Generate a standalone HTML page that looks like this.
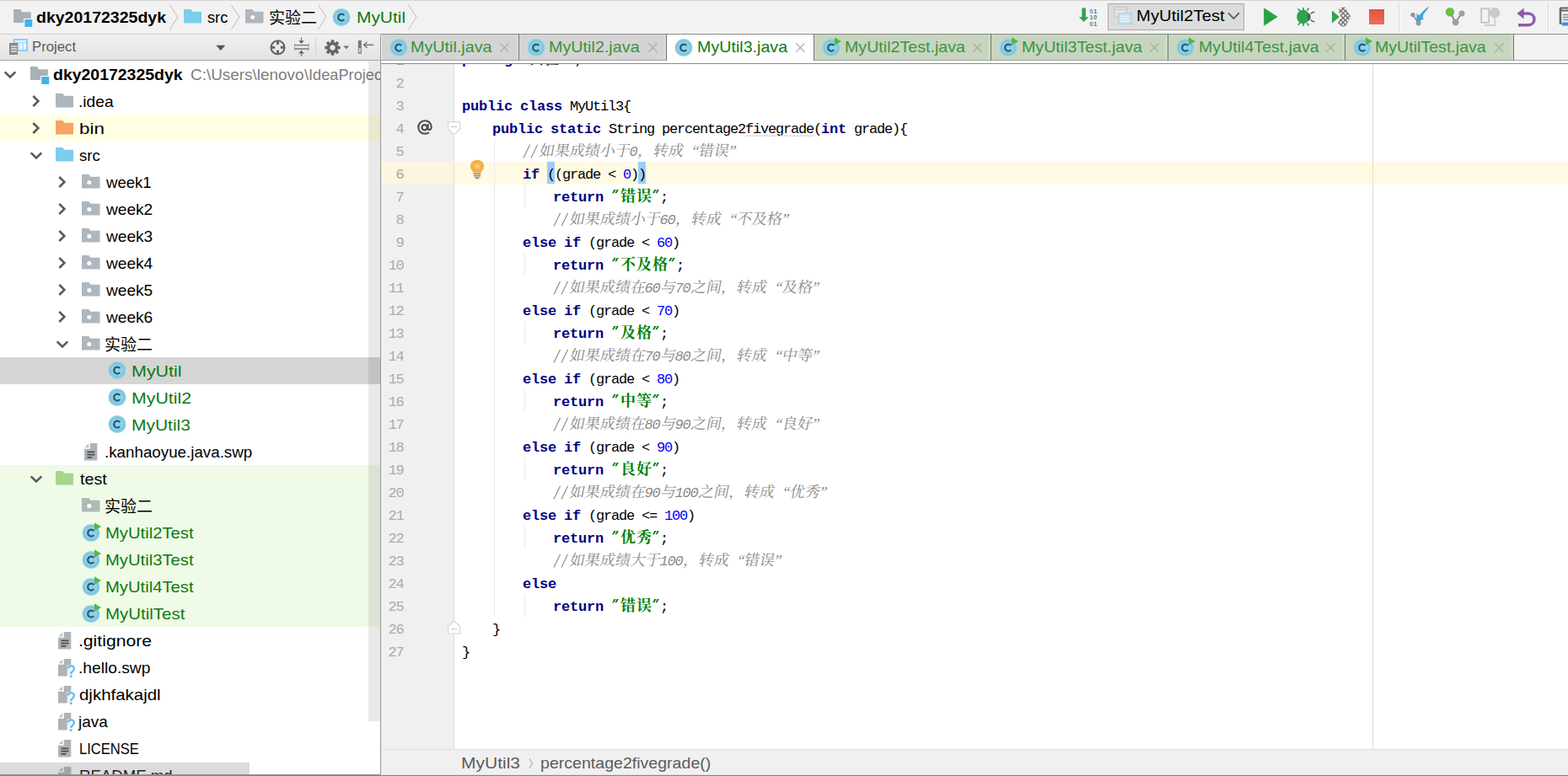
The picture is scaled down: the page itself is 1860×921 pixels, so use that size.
<!DOCTYPE html>
<html><head><meta charset="utf-8"><title>MyUtil3.java</title><style>
html,body{margin:0;padding:0;overflow:hidden}
body{width:1860px;height:921px;overflow:hidden;position:relative;background:#fff;font-family:"Liberation Sans", sans-serif;}
.t{position:absolute;white-space:pre;line-height:1;font-family:"Liberation Sans", sans-serif;transform-origin:0 0;}
.m{position:absolute;white-space:pre;line-height:1;font-family:"Liberation Mono", monospace;}
.g{position:absolute;overflow:visible;display:block}
svg.e{overflow:hidden}
</style></head>
<body>
<div style="position:absolute;left:0px;top:0px;width:1860px;height:41px;background:#f2f2f2;"></div>
<div style="position:absolute;left:0px;top:0px;width:1860px;height:1px;background:#d4d4d4;"></div>
<div style="position:absolute;left:0px;top:40px;width:1860px;height:1px;background:#cfcfcf;"></div>
<div style="position:absolute;left:0px;top:41px;width:452px;height:30px;background:linear-gradient(#f0f0f0,#e3e3e3);"></div>
<div style="position:absolute;left:0px;top:71px;width:452px;height:1px;background:#a6a6a6;"></div>
<div style="position:absolute;left:0px;top:72px;width:452px;height:849px;background:#fff;"></div>
<div style="position:absolute;left:452px;top:41px;width:1408px;height:30px;background:#f2f2f2;"></div>
<div style="position:absolute;left:452px;top:71px;width:1408px;height:4px;background:#fff;"></div>
<div style="position:absolute;left:452px;top:75px;width:1408px;height:1px;background:#8c8c8c;"></div>
<div style="position:absolute;left:452px;top:76px;width:1408px;height:813px;background:#fff;"></div>
<div style="position:absolute;left:452px;top:76px;width:86px;height:813px;background:#f0f0f0;"></div>
<div style="position:absolute;left:538px;top:76px;width:1px;height:813px;background:#dedede;"></div>
<div style="position:absolute;left:1628px;top:76px;width:1px;height:813px;background:#dcdcdc;"></div>
<div style="position:absolute;left:452px;top:192px;width:86px;height:27px;background:#fcf5df;"></div>
<div style="position:absolute;left:539px;top:192px;width:1321px;height:27px;background:#fffae3;"></div>
<div style="position:absolute;left:1628px;top:192px;width:1px;height:27px;background:#e6dfc8;"></div>
<div style="position:absolute;left:452px;top:889px;width:1408px;height:30px;background:#f0f0f0;"></div>
<div style="position:absolute;left:452px;top:889px;width:1408px;height:1px;background:#dedede;"></div>
<div style="position:absolute;left:451px;top:41px;width:1px;height:880px;background:#959595;"></div>
<div style="position:absolute;left:0px;top:920px;width:1860px;height:1px;background:#858585;"></div>
<div style="position:absolute;left:0px;top:919px;width:452px;height:1px;background:#939393;"></div>
<div style="position:absolute;left:452px;top:919px;width:1408px;height:1px;background:#e4e4e4;"></div>
<svg class="g" style="left:16px;top:11px;" width="23" height="22" viewBox="0 0 23 22"><path d="M0,0H8.2L9.8,3.3H20.8V16H0Z" fill="#a9b0b6"/><rect x="12.2" y="11" width="11" height="11" fill="#fff"/><rect x="13.3" y="12" width="9" height="9" fill="#40b4e6"/></svg>
<span class="t" style="left:43.27px;top:10.62px;font-size:19px;color:#000;font-weight:bold;transform:scaleX(1.0268);">dky20172325dyk</span>
<svg class="g" style="left:199.8px;top:4px;" width="13" height="34" viewBox="0 0 13 34"><path d="M0.2,1.5L9.8,16.2L0.2,31" fill="none" stroke="#fbfbfb" stroke-width="1.2"/><path d="M1.2,1.5L10.8,16.2L1.2,31" fill="none" stroke="#c6c6c6" stroke-width="1.2"/></svg>
<svg class="g" style="left:218.4px;top:10.6px;" width="21" height="17" viewBox="0 0 21 17"><path d="M0,0H8.5L10.2,2.7H21V16.5H0Z" fill="#7ccdec"/></svg>
<span class="t" style="left:246.34px;top:10.62px;font-size:19px;color:#000;font-weight:normal;transform:scaleX(0.9583);">src</span>
<svg class="g" style="left:273.2px;top:4px;" width="13" height="34" viewBox="0 0 13 34"><path d="M0.2,1.5L9.8,16.2L0.2,31" fill="none" stroke="#fbfbfb" stroke-width="1.2"/><path d="M1.2,1.5L10.8,16.2L1.2,31" fill="none" stroke="#c6c6c6" stroke-width="1.2"/></svg>
<svg class="g" style="left:291px;top:10.8px;" width="22" height="17" viewBox="0 0 22 17"><path d="M0,0H8.5L10.2,2.7H21.5V16.5H0Z" fill="#aeb6be"/><circle cx="8.8" cy="9.6" r="2.5" fill="#fff"/></svg>
<svg class="g" style="left:318.7px;top:8.7px" width="65" height="27" fill="#000"><text x="0" y="19" font-size="19" fill="#000" font-family="'Liberation Sans','Noto Sans CJK SC',sans-serif">实验二</text></svg>
<svg class="g" style="left:375.9px;top:4px;" width="13" height="34" viewBox="0 0 13 34"><path d="M0.2,1.5L9.8,16.2L0.2,31" fill="none" stroke="#fbfbfb" stroke-width="1.2"/><path d="M1.2,1.5L10.8,16.2L1.2,31" fill="none" stroke="#c6c6c6" stroke-width="1.2"/></svg>
<svg class="g" style="left:393.6px;top:7.5px;overflow:visible;" width="24" height="22" viewBox="0 -1.5 24 22"><circle cx="11" cy="11" r="10.5" fill="#8fd2e6"/><circle cx="11" cy="11" r="8.2" fill="none" stroke="#7ec6df" stroke-width="2.2"/><path d="M14.3,8.6A4,4 0 1 0 14.3,13.6" fill="none" stroke="#2b5b78" stroke-width="2.3"/></svg>
<span class="t" style="left:422.60px;top:10.62px;font-size:19px;color:#0f7a0f;font-weight:normal;transform:scaleX(1.1000);">MyUtil</span>
<svg class="g" style="left:482.6px;top:4px;" width="13" height="34" viewBox="0 0 13 34"><path d="M0.2,1.5L9.8,16.2L0.2,31" fill="none" stroke="#fbfbfb" stroke-width="1.2"/><path d="M1.2,1.5L10.8,16.2L1.2,31" fill="none" stroke="#c6c6c6" stroke-width="1.2"/></svg>
<svg class="g" style="left:11px;top:46px;" width="22" height="20" viewBox="0 0 22 20"><rect x="5.5" y="1" width="15.5" height="13" fill="#e9f5fd" stroke="#7cc3ee" stroke-width="1.6"/><path d="M5.5,4.5h15.5M11,4.5v9.5M16,4.5v9.5" stroke="#9ad0f2" stroke-width="1"/><rect x="0" y="5" width="10" height="14" fill="#8a8a8a"/><path d="M2,9h7M2,12h7M2,15h7" stroke="#e6e6e6" stroke-width="1.3"/></svg>
<span class="t" style="left:38.05px;top:47.76px;font-size:16px;color:#595959;font-weight:normal;transform:scaleX(1.0469);">Project</span>
<svg class="g" style="left:256px;top:53px;" width="12" height="8" viewBox="0 0 12 8"><path d="M0.3,0.8H11.3L5.8,7Z" fill="#555"/></svg>
<svg class="g" style="left:319px;top:46px;" width="21" height="21" viewBox="0 0 21 21"><circle cx="10.5" cy="10.3" r="8" fill="none" stroke="#666" stroke-width="2.1"/><path d="M10.5,2v5M10.5,13.6v5M2.2,10.3h5M13.8,10.3h5" stroke="#666" stroke-width="3"/></svg>
<svg class="g" style="left:348px;top:44px;" width="20" height="24" viewBox="0 0 20 24"><path d="M1,9.6h17.5M1,14h17.5" stroke="#777" stroke-width="1.3"/><path d="M9.5,0.5v7M9.5,23v-7" stroke="#777" stroke-width="1.2"/><path d="M6.2,4.2L9.5,8L12.8,4.2ZM6.2,19.4L9.5,15.6L12.8,19.4Z" fill="#666"/><path d="M1.5,7.5v4M18,7.5v4M1.5,12v4M18,12v4" stroke="#999" stroke-width="1"/></svg>
<div style="position:absolute;left:374px;top:44px;width:1px;height:21px;background:#d2d2d2;"></div>
<svg class="g" style="left:385px;top:46.5px;" width="19" height="19" viewBox="0 0 19 19"><g transform="translate(9.5,9.5)"><rect x="-1.8" y="-9.2" width="3.6" height="6" fill="#666" transform="rotate(0)"/><rect x="-1.8" y="-9.2" width="3.6" height="6" fill="#666" transform="rotate(45)"/><rect x="-1.8" y="-9.2" width="3.6" height="6" fill="#666" transform="rotate(90)"/><rect x="-1.8" y="-9.2" width="3.6" height="6" fill="#666" transform="rotate(135)"/><rect x="-1.8" y="-9.2" width="3.6" height="6" fill="#666" transform="rotate(180)"/><rect x="-1.8" y="-9.2" width="3.6" height="6" fill="#666" transform="rotate(225)"/><rect x="-1.8" y="-9.2" width="3.6" height="6" fill="#666" transform="rotate(270)"/><rect x="-1.8" y="-9.2" width="3.6" height="6" fill="#666" transform="rotate(315)"/><circle r="5.2" fill="none" stroke="#666" stroke-width="3.2"/></g></svg>
<svg class="g" style="left:407px;top:54px;" width="8" height="5" viewBox="0 0 8 5"><path d="M0.3,0.5H7.2L3.8,4.5Z" fill="#777"/></svg>
<svg class="g" style="left:424px;top:47px;" width="21" height="18" viewBox="0 0 21 18"><rect x="0.8" y="1" width="4" height="15.8" fill="#777"/><rect x="1.8" y="10" width="2" height="5.5" fill="#ddd"/><path d="M8,6.3h11" stroke="#777" stroke-width="1.5"/><path d="M11.5,2.8L7.6,6.3L11.5,9.8" fill="none" stroke="#777" stroke-width="1.5"/></svg>
<div style="position:absolute;left:0;top:72px;width:451px;height:847px;overflow:hidden">
<div style="position:absolute;left:0;top:-72px;width:600px;height:921px">
<div style="position:absolute;left:0px;top:136px;width:451px;height:32px;background:#ffffe4;"></div>
<div style="position:absolute;left:0px;top:424px;width:451px;height:32px;background:#d5d5d5;"></div>
<div style="position:absolute;left:0px;top:552px;width:451px;height:192px;background:#effae7;"></div>
<svg class="g" style="left:3.4000000000000004px;top:83.3px;" width="18" height="12" viewBox="0 0 18 12"><path d="M2.7,2.3L9,8.4L15.3,2.3" fill="none" stroke="#595959" stroke-width="2.5"/></svg>
<svg class="g" style="left:36px;top:78.5px;" width="23" height="22" viewBox="0 0 23 22"><path d="M0,0H8.2L9.8,3.3H20.8V16H0Z" fill="#a9b0b6"/><rect x="12.2" y="11" width="11" height="11" fill="#fff"/><rect x="13.3" y="12" width="9" height="9" fill="#40b4e6"/></svg>
<span class="t" style="left:62.88px;top:78.92px;font-size:19px;color:#000;font-weight:bold;transform:scaleX(1.0235);">dky20172325dyk</span>
<span class="t" style="left:226.31px;top:78.92px;font-size:19px;color:#7d7d7d;font-weight:normal;transform:scaleX(0.9947);">C:\Users\lenovo</span>
<span class="t" style="left:360.80px;top:78.92px;font-size:19px;color:#7d7d7d;font-weight:normal;transform:scaleX(0.9575);">\IdeaProjects\dky</span>
<svg class="g" style="left:36.8px;top:111px;" width="12" height="18" viewBox="0 0 12 18"><path d="M2.3,3L8.4,9L2.3,15" fill="none" stroke="#595959" stroke-width="2.5"/></svg>
<svg class="g" style="left:66.3px;top:111.2px;" width="21" height="17" viewBox="0 0 21 17"><path d="M0,0H8.5L10.2,2.7H21V16.5H0Z" fill="#adb5bd"/></svg>
<span class="t" style="left:93.18px;top:110.62px;font-size:19px;color:#000;font-weight:normal;transform:scaleX(1.0103);">.idea</span>
<svg class="g" style="left:36.8px;top:143px;" width="12" height="18" viewBox="0 0 12 18"><path d="M2.3,3L8.4,9L2.3,15" fill="none" stroke="#595959" stroke-width="2.5"/></svg>
<svg class="g" style="left:66.3px;top:143.2px;" width="21" height="17" viewBox="0 0 21 17"><path d="M0,0H8.5L10.2,2.7H21V16.5H0Z" fill="#f9a264"/></svg>
<span class="t" style="left:94.02px;top:142.62px;font-size:19px;color:#000;font-weight:normal;transform:scaleX(1.1783);">bin</span>
<svg class="g" style="left:33.9px;top:179.35px;" width="18" height="12" viewBox="0 0 18 12"><path d="M2.7,2.3L9,8.4L15.3,2.3" fill="none" stroke="#595959" stroke-width="2.5"/></svg>
<svg class="g" style="left:66.3px;top:175.2px;" width="21" height="17" viewBox="0 0 21 17"><path d="M0,0H8.5L10.2,2.7H21V16.5H0Z" fill="#7ccdec"/></svg>
<span class="t" style="left:94.22px;top:174.62px;font-size:19px;color:#000;font-weight:normal;transform:scaleX(0.9750);">src</span>
<svg class="g" style="left:67.5px;top:207px;" width="12" height="18" viewBox="0 0 12 18"><path d="M2.3,3L8.4,9L2.3,15" fill="none" stroke="#595959" stroke-width="2.5"/></svg>
<svg class="g" style="left:97px;top:207.2px;" width="22" height="17" viewBox="0 0 22 17"><path d="M0,0H8.5L10.2,2.7H21.5V16.5H0Z" fill="#aeb6be"/><circle cx="8.8" cy="9.6" r="2.5" fill="#fff"/></svg>
<span class="t" style="left:125.80px;top:206.62px;font-size:19px;color:#000;font-weight:normal;transform:scaleX(0.9778);">week1</span>
<svg class="g" style="left:67.5px;top:239px;" width="12" height="18" viewBox="0 0 12 18"><path d="M2.3,3L8.4,9L2.3,15" fill="none" stroke="#595959" stroke-width="2.5"/></svg>
<svg class="g" style="left:97px;top:239.2px;" width="22" height="17" viewBox="0 0 22 17"><path d="M0,0H8.5L10.2,2.7H21.5V16.5H0Z" fill="#aeb6be"/><circle cx="8.8" cy="9.6" r="2.5" fill="#fff"/></svg>
<span class="t" style="left:125.80px;top:238.62px;font-size:19px;color:#000;font-weight:normal;transform:scaleX(1.0056);">week2</span>
<svg class="g" style="left:67.5px;top:271px;" width="12" height="18" viewBox="0 0 12 18"><path d="M2.3,3L8.4,9L2.3,15" fill="none" stroke="#595959" stroke-width="2.5"/></svg>
<svg class="g" style="left:97px;top:271.2px;" width="22" height="17" viewBox="0 0 22 17"><path d="M0,0H8.5L10.2,2.7H21.5V16.5H0Z" fill="#aeb6be"/><circle cx="8.8" cy="9.6" r="2.5" fill="#fff"/></svg>
<span class="t" style="left:125.80px;top:270.62px;font-size:19px;color:#000;font-weight:normal;transform:scaleX(1.0056);">week3</span>
<svg class="g" style="left:67.5px;top:303px;" width="12" height="18" viewBox="0 0 12 18"><path d="M2.3,3L8.4,9L2.3,15" fill="none" stroke="#595959" stroke-width="2.5"/></svg>
<svg class="g" style="left:97px;top:303.2px;" width="22" height="17" viewBox="0 0 22 17"><path d="M0,0H8.5L10.2,2.7H21.5V16.5H0Z" fill="#aeb6be"/><circle cx="8.8" cy="9.6" r="2.5" fill="#fff"/></svg>
<span class="t" style="left:125.80px;top:302.62px;font-size:19px;color:#000;font-weight:normal;transform:scaleX(1.0056);">week4</span>
<svg class="g" style="left:67.5px;top:335px;" width="12" height="18" viewBox="0 0 12 18"><path d="M2.3,3L8.4,9L2.3,15" fill="none" stroke="#595959" stroke-width="2.5"/></svg>
<svg class="g" style="left:97px;top:335.2px;" width="22" height="17" viewBox="0 0 22 17"><path d="M0,0H8.5L10.2,2.7H21.5V16.5H0Z" fill="#aeb6be"/><circle cx="8.8" cy="9.6" r="2.5" fill="#fff"/></svg>
<span class="t" style="left:125.80px;top:334.62px;font-size:19px;color:#000;font-weight:normal;transform:scaleX(1.0056);">week5</span>
<svg class="g" style="left:67.5px;top:367px;" width="12" height="18" viewBox="0 0 12 18"><path d="M2.3,3L8.4,9L2.3,15" fill="none" stroke="#595959" stroke-width="2.5"/></svg>
<svg class="g" style="left:97px;top:367.2px;" width="22" height="17" viewBox="0 0 22 17"><path d="M0,0H8.5L10.2,2.7H21.5V16.5H0Z" fill="#aeb6be"/><circle cx="8.8" cy="9.6" r="2.5" fill="#fff"/></svg>
<span class="t" style="left:125.80px;top:366.62px;font-size:19px;color:#000;font-weight:normal;transform:scaleX(1.0056);">week6</span>
<svg class="g" style="left:64.5px;top:403.35px;" width="18" height="12" viewBox="0 0 18 12"><path d="M2.7,2.3L9,8.4L15.3,2.3" fill="none" stroke="#595959" stroke-width="2.5"/></svg>
<svg class="g" style="left:97px;top:399.2px;" width="22" height="17" viewBox="0 0 22 17"><path d="M0,0H8.5L10.2,2.7H21.5V16.5H0Z" fill="#aeb6be"/><circle cx="8.8" cy="9.6" r="2.5" fill="#fff"/></svg>
<svg class="g" style="left:123.8px;top:396.8px" width="65" height="27" fill="#000"><text x="0" y="19" font-size="19" fill="#000" font-family="'Liberation Sans','Noto Sans CJK SC',sans-serif">实验二</text></svg>
<svg class="g" style="left:128px;top:427.1px;overflow:visible;" width="24" height="22" viewBox="0 -1.5 24 22"><circle cx="11" cy="11" r="10.5" fill="#8fd2e6"/><circle cx="11" cy="11" r="8.2" fill="none" stroke="#7ec6df" stroke-width="2.2"/><path d="M14.3,8.6A4,4 0 1 0 14.3,13.6" fill="none" stroke="#2b5b78" stroke-width="2.3"/></svg>
<span class="t" style="left:155.54px;top:430.62px;font-size:19px;color:#0f7a0f;font-weight:normal;transform:scaleX(1.1300);">MyUtil</span>
<svg class="g" style="left:128px;top:459.1px;overflow:visible;" width="24" height="22" viewBox="0 -1.5 24 22"><circle cx="11" cy="11" r="10.5" fill="#8fd2e6"/><circle cx="11" cy="11" r="8.2" fill="none" stroke="#7ec6df" stroke-width="2.2"/><path d="M14.3,8.6A4,4 0 1 0 14.3,13.6" fill="none" stroke="#2b5b78" stroke-width="2.3"/></svg>
<span class="t" style="left:155.56px;top:462.62px;font-size:19px;color:#0f7a0f;font-weight:normal;transform:scaleX(1.1217);">MyUtil2</span>
<svg class="g" style="left:128px;top:491.1px;overflow:visible;" width="24" height="22" viewBox="0 -1.5 24 22"><circle cx="11" cy="11" r="10.5" fill="#8fd2e6"/><circle cx="11" cy="11" r="8.2" fill="none" stroke="#7ec6df" stroke-width="2.2"/><path d="M14.3,8.6A4,4 0 1 0 14.3,13.6" fill="none" stroke="#2b5b78" stroke-width="2.3"/></svg>
<span class="t" style="left:155.59px;top:494.62px;font-size:19px;color:#0f7a0f;font-weight:normal;transform:scaleX(1.1033);">MyUtil3</span>
<svg class="g" style="left:100.3px;top:526px;overflow:visible;" width="22" height="22" viewBox="0 0 22 22"><path d="M6.8,0H15.3V20.4H0V6.8H6.8Z" fill="#adb3b8"/><path d="M5.2,0.6V5.2H0.6Z" fill="#b9bec3"/><path d="M3.4,10.3h9M3.4,13.6h9M3.4,16.9h6" stroke="#4d4d4d" stroke-width="1.7"/></svg>
<span class="t" style="left:123.83px;top:526.62px;font-size:19px;color:#000;font-weight:normal;transform:scaleX(0.9874);">.kanhaoyue.java.swp</span>
<svg class="g" style="left:34px;top:563.35px;" width="18" height="12" viewBox="0 0 18 12"><path d="M2.7,2.3L9,8.4L15.3,2.3" fill="none" stroke="#595959" stroke-width="2.5"/></svg>
<svg class="g" style="left:66.3px;top:559.2px;" width="21" height="17" viewBox="0 0 21 17"><path d="M0,0H8.5L10.2,2.7H21V16.5H0Z" fill="#a6d588"/></svg>
<span class="t" style="left:95.20px;top:558.62px;font-size:19px;color:#000;font-weight:normal;transform:scaleX(1.0367);">test</span>
<svg class="g" style="left:97px;top:591.2px;" width="22" height="17" viewBox="0 0 22 17"><path d="M0,0H8.5L10.2,2.7H21.5V16.5H0Z" fill="#b1b9b7"/><circle cx="8.8" cy="9.6" r="2.5" fill="#fff"/></svg>
<svg class="g" style="left:123.8px;top:588.8px" width="65" height="27" fill="#000"><text x="0" y="19" font-size="19" fill="#000" font-family="'Liberation Sans','Noto Sans CJK SC',sans-serif">实验二</text></svg>
<svg class="g" style="left:97px;top:619.8px;overflow:visible;" width="24" height="22" viewBox="0 -1.5 24 22"><circle cx="11" cy="11" r="10.5" fill="#8fd2e6"/><circle cx="11" cy="11" r="8.2" fill="none" stroke="#7ec6df" stroke-width="2.2"/><path d="M14.3,8.6A4,4 0 1 0 14.3,13.6" fill="none" stroke="#2b5b78" stroke-width="2.3"/><path d="M15,-1.2V8.3L23,3.6Z" fill="#55b548"/></svg>
<span class="t" style="left:124.87px;top:622.62px;font-size:19px;color:#0f7a0f;font-weight:normal;transform:scaleX(1.0656);">MyUtil2Test</span>
<svg class="g" style="left:97px;top:651.8px;overflow:visible;" width="24" height="22" viewBox="0 -1.5 24 22"><circle cx="11" cy="11" r="10.5" fill="#8fd2e6"/><circle cx="11" cy="11" r="8.2" fill="none" stroke="#7ec6df" stroke-width="2.2"/><path d="M14.3,8.6A4,4 0 1 0 14.3,13.6" fill="none" stroke="#2b5b78" stroke-width="2.3"/><path d="M15,-1.2V8.3L23,3.6Z" fill="#55b548"/></svg>
<span class="t" style="left:124.87px;top:654.62px;font-size:19px;color:#0f7a0f;font-weight:normal;transform:scaleX(1.0656);">MyUtil3Test</span>
<svg class="g" style="left:97px;top:683.8px;overflow:visible;" width="24" height="22" viewBox="0 -1.5 24 22"><circle cx="11" cy="11" r="10.5" fill="#8fd2e6"/><circle cx="11" cy="11" r="8.2" fill="none" stroke="#7ec6df" stroke-width="2.2"/><path d="M14.3,8.6A4,4 0 1 0 14.3,13.6" fill="none" stroke="#2b5b78" stroke-width="2.3"/><path d="M15,-1.2V8.3L23,3.6Z" fill="#55b548"/></svg>
<span class="t" style="left:124.87px;top:686.62px;font-size:19px;color:#0f7a0f;font-weight:normal;transform:scaleX(1.0656);">MyUtil4Test</span>
<svg class="g" style="left:97px;top:715.8px;overflow:visible;" width="24" height="22" viewBox="0 -1.5 24 22"><circle cx="11" cy="11" r="10.5" fill="#8fd2e6"/><circle cx="11" cy="11" r="8.2" fill="none" stroke="#7ec6df" stroke-width="2.2"/><path d="M14.3,8.6A4,4 0 1 0 14.3,13.6" fill="none" stroke="#2b5b78" stroke-width="2.3"/><path d="M15,-1.2V8.3L23,3.6Z" fill="#55b548"/></svg>
<span class="t" style="left:124.84px;top:718.62px;font-size:19px;color:#0f7a0f;font-weight:normal;transform:scaleX(1.0776);">MyUtilTest</span>
<svg class="g" style="left:69.3px;top:750px;overflow:visible;" width="22" height="22" viewBox="0 0 22 22"><path d="M6.8,0H15.3V20.4H0V6.8H6.8Z" fill="#adb3b8"/><path d="M5.2,0.6V5.2H0.6Z" fill="#b9bec3"/><path d="M3.4,10.3h9M3.4,13.6h9M3.4,16.9h6" stroke="#4d4d4d" stroke-width="1.7"/></svg>
<span class="t" style="left:92.98px;top:750.62px;font-size:19px;color:#000;font-weight:normal;transform:scaleX(1.1120);">.gitignore</span>
<svg class="g" style="left:69.3px;top:782px;overflow:visible;" width="22" height="22" viewBox="0 0 22 22"><path d="M6.8,0H15.3V20.4H0V6.8H6.8Z" fill="#adb3b8"/><path d="M5.2,0.6V5.2H0.6Z" fill="#b9bec3"/><path d="M10.6,7.4h10v14.2h-10z" fill="#fff" opacity=".8"/><path d="M11.8,11.6C11.8,7.4 18.9,7.2 18.9,11.6C18.9,14.6 15.3,14.6 15.3,18" fill="none" stroke="#5fbfeb" stroke-width="2.3"/><circle cx="15.3" cy="20.8" r="1.45" fill="#5fbfeb"/></svg>
<span class="t" style="left:93.18px;top:782.62px;font-size:19px;color:#000;font-weight:normal;transform:scaleX(1.0110);">.hello.swp</span>
<svg class="g" style="left:69.3px;top:814px;overflow:visible;" width="22" height="22" viewBox="0 0 22 22"><path d="M6.8,0H15.3V20.4H0V6.8H6.8Z" fill="#adb3b8"/><path d="M5.2,0.6V5.2H0.6Z" fill="#b9bec3"/><path d="M10.6,7.4h10v14.2h-10z" fill="#fff" opacity=".8"/><path d="M11.8,11.6C11.8,7.4 18.9,7.2 18.9,11.6C18.9,14.6 15.3,14.6 15.3,18" fill="none" stroke="#5fbfeb" stroke-width="2.3"/><circle cx="15.3" cy="20.8" r="1.45" fill="#5fbfeb"/></svg>
<span class="t" style="left:94.32px;top:814.62px;font-size:19px;color:#000;font-weight:normal;transform:scaleX(1.0761);">djkhfakajdl</span>
<svg class="g" style="left:69.3px;top:846px;overflow:visible;" width="22" height="22" viewBox="0 0 22 22"><path d="M6.8,0H15.3V20.4H0V6.8H6.8Z" fill="#adb3b8"/><path d="M5.2,0.6V5.2H0.6Z" fill="#b9bec3"/><path d="M10.6,7.4h10v14.2h-10z" fill="#fff" opacity=".8"/><path d="M11.8,11.6C11.8,7.4 18.9,7.2 18.9,11.6C18.9,14.6 15.3,14.6 15.3,18" fill="none" stroke="#5fbfeb" stroke-width="2.3"/><circle cx="15.3" cy="20.8" r="1.45" fill="#5fbfeb"/></svg>
<span class="t" style="left:93.20px;top:846.62px;font-size:19px;color:#000;font-weight:normal;transform:scaleX(0.9971);">java</span>
<svg class="g" style="left:69.3px;top:878px;overflow:visible;" width="22" height="22" viewBox="0 0 22 22"><path d="M6.8,0H15.3V20.4H0V6.8H6.8Z" fill="#adb3b8"/><path d="M5.2,0.6V5.2H0.6Z" fill="#b9bec3"/><path d="M3.4,10.3h9M3.4,13.6h9M3.4,16.9h6" stroke="#4d4d4d" stroke-width="1.7"/></svg>
<span class="t" style="left:94.06px;top:878.62px;font-size:19px;color:#000;font-weight:normal;transform:scaleX(0.8709);">LICENSE</span>
<svg class="g" style="left:69.3px;top:910px;overflow:visible;" width="22" height="22" viewBox="0 0 22 22"><path d="M6.8,0H15.3V20.4H0V6.8H6.8Z" fill="#adb3b8"/><path d="M5.2,0.6V5.2H0.6Z" fill="#b9bec3"/><path d="M3.4,10.3h9M3.4,13.6h9M3.4,16.9h6" stroke="#4d4d4d" stroke-width="1.7"/></svg>
<span class="t" style="left:93.84px;top:910.62px;font-size:19px;color:#000;font-weight:normal;transform:scaleX(0.9800);">README.md</span>
<div style="position:absolute;left:437px;top:72px;width:14px;height:784px;background:rgba(0,0,0,0.085);"></div>
<div style="position:absolute;left:0px;top:905px;width:296px;height:14px;background:rgba(130,130,130,0.28);"></div>
</div></div>
<svg class="g" style="left:1279px;top:8px;" width="26" height="25" viewBox="0 0 26 25"><path d="M4.4,1.6H8.9V12.3H12.3L6.6,18L0.9,12.3H4.4Z" fill="#2da44e"/><g font-family='"Liberation Sans",sans-serif' font-size="7.4" font-weight="bold" fill="#6e6e6e"><text x="13.6" y="7.6" letter-spacing="0.6"><tspan fill="#4a8fd0">0</tspan>1</text><text x="13.6" y="15.2" letter-spacing="0.6"><tspan fill="#3d9b6a">1</tspan>0</text><text x="13.6" y="22.8" letter-spacing="0.6"><tspan fill="#8a7a6a">0</tspan>1</text></g></svg>
<div style="position:absolute;left:1314px;top:4px;width:162px;height:31.5px;background:#dcdcdc;box-sizing:border-box;border:1.5px solid #a9a9a9;"></div>
<svg class="g" style="left:1320px;top:7px;" width="25" height="23" viewBox="0 0 25 23"><rect x="1.8" y="1.5" width="15" height="11.5" fill="#e4e4e4" stroke="#c6c6c6" stroke-width="1.2"/><path d="M1.8,4.3h15" stroke="#c6c6c6" stroke-width="1.2"/><rect x="6.8" y="8.8" width="15.5" height="12.5" fill="#c4e2f3" stroke="#b4cfdf" stroke-width="1.2"/><path d="M9,12.4h11M9,15.4h11M9,18.4h11" stroke="#eaf5fb" stroke-width="1.3"/></svg>
<span class="t" style="left:1347.77px;top:8.72px;font-size:19px;color:#000;font-weight:normal;transform:scaleX(1.0667);">MyUtil2Test</span>
<svg class="g" style="left:1456px;top:14px;" width="15" height="10" viewBox="0 0 15 10"><path d="M1,1.3L7.4,8L13.8,1.3" fill="none" stroke="#555" stroke-width="1.7"/></svg>
<svg class="g" style="left:1498px;top:8px;" width="20" height="24" viewBox="0 0 20 24"><path d="M1.2,1.2V22.8L17.6,12Z" fill="#27a243"/></svg>
<svg class="g" style="left:1536px;top:8px;" width="26" height="24" viewBox="0 0 26 24"><g stroke="#2da44e" stroke-width="1.7" fill="none"><path d="M6.5,5.5L3.8,2.2M10.5,4L9.8,1M14.5,4.6L16.6,1.6M6.5,18.5L3.8,21.8M10.5,20L9.8,23M14.5,19.4L16.6,22.4"/></g><ellipse cx="9.8" cy="12" rx="7.6" ry="8.2" fill="#2da44e"/><path d="M16,7.2C19.6,8.6 19.6,15.4 16,16.8C14.4,14 14.4,10 16,7.2Z" fill="#555"/><path d="M19,8.6C20,6.8 21.6,6.2 23.4,6.2M19,15.4C20,17.2 21.6,17.8 23.4,17.8" fill="none" stroke="#666" stroke-width="1.5"/></svg>
<svg class="g" style="left:1579px;top:8px;" width="25" height="24" viewBox="0 0 25 24"><path d="M1,4.6V19.4L10,12Z" fill="#2da44e"/><clipPath id="covclip"><path d="M8,4.2L12.6,0.6H16.6L23.4,12L16.6,23.4H12.6L8,19.8L12,12Z"/></clipPath><g stroke="#737373" stroke-width="1.4" fill="none" clip-path="url(#covclip)"><path d="M-42.2,0L-18.2,24M-15.8,0L-39.8,24"/><path d="M-36.8,0L-12.8,24M-10.4,0L-34.4,24"/><path d="M-31.4,0L-7.4,24M-5.0,0L-29.0,24"/><path d="M-26.0,0L-2.0,24M0.4,0L-23.6,24"/><path d="M-20.6,0L3.4,24M5.8,0L-18.2,24"/><path d="M-15.2,0L8.8,24M11.2,0L-12.8,24"/><path d="M-9.8,0L14.2,24M16.6,0L-7.4,24"/><path d="M-4.4,0L19.6,24M22.0,0L-2.0,24"/><path d="M1.0,0L25.0,24M27.4,0L3.4,24"/><path d="M6.4,0L30.4,24M32.8,0L8.8,24"/><path d="M11.8,0L35.8,24M38.2,0L14.2,24"/><path d="M17.2,0L41.2,24M43.6,0L19.6,24"/><path d="M22.6,0L46.6,24M49.0,0L25.0,24"/><path d="M28.0,0L52.0,24M54.4,0L30.4,24"/><path d="M33.4,0L57.4,24M59.8,0L35.8,24"/><path d="M38.8,0L62.8,24M65.2,0L41.2,24"/><path d="M44.2,0L68.2,24M70.6,0L46.6,24"/></g></svg>
<div style="position:absolute;left:1624px;top:11px;width:18px;height:18px;background:linear-gradient(#de523e,#f26d58);"></div>
<div style="position:absolute;left:1659px;top:3px;width:1px;height:36px;background:#d6d6d6;"></div>
<div style="position:absolute;left:1660px;top:3px;width:1px;height:36px;background:#fafafa;"></div>
<svg class="g" style="left:1670px;top:6px;" width="28" height="27" viewBox="0 0 28 27"><path d="M6,11.6L12.6,21.4L18,12" fill="none" stroke="#8d93a0" stroke-width="1.8"/><circle cx="6" cy="11.6" r="2.7" fill="#9197a3"/><circle cx="12.6" cy="21.4" r="3" fill="#9197a3"/><path d="M26,1.6C21,4 17,8 13.6,12.4L10.6,9.8L10.2,19.6L19.4,16.6L16.4,14.6C19,10.4 22,6.4 26,1.6Z" fill="#39a8dc"/></svg>
<svg class="g" style="left:1712px;top:6px;" width="28" height="27" viewBox="0 0 28 27"><path d="M8,8.2L14.6,20.4L22,10" fill="none" stroke="#8d93a0" stroke-width="2"/><circle cx="22" cy="10" r="3.5" fill="#9a9fae"/><circle cx="14.6" cy="20.4" r="3.8" fill="#9a9fae"/><circle cx="8" cy="8.2" r="5.2" fill="#6abf45"/></svg>
<svg class="g" style="left:1755px;top:8px;" width="27" height="24" viewBox="0 0 27 24"><circle cx="18" cy="7.2" r="6.2" fill="#c9c9c9"/><rect x="2.2" y="2.2" width="9" height="16.6" fill="#f2f2f2" stroke="#c4c4c4" stroke-width="1.8"/><path d="M6,22h12.4V12" fill="none" stroke="#cdcdcd" stroke-width="1.8"/></svg>
<svg class="g" style="left:1798px;top:8px;" width="25" height="25" viewBox="0 0 25 25"><path d="M8,8H14.5C24.5,8 24.5,21.8 14.5,21.8H3" fill="none" stroke="#8a5db0" stroke-width="3.4"/><path d="M9.6,1.6V14.4L1.4,8Z" fill="#8a5db0"/></svg>
<div style="position:absolute;left:1836px;top:3px;width:1px;height:36px;background:#d6d6d6;"></div>
<div style="position:absolute;left:1837px;top:3px;width:1px;height:36px;background:#fafafa;"></div>
<svg class="g" style="left:1849px;top:8px;" width="11" height="24" viewBox="0 0 11 24"><path d="M2,1.5h10M2,4.5h10" stroke="#666" stroke-width="2.2"/><path d="M2,1v20" stroke="#666" stroke-width="2.6"/><path d="M5,9.5h7M5,12.5h7M5,15.5h7" stroke="#888" stroke-width="1.3"/><rect x="4" y="18.5" width="8" height="4" fill="#3d8fd8"/></svg>
<div style="position:absolute;left:452px;top:40px;width:1408px;height:1px;background:#8f8f8f;"></div>
<div style="position:absolute;left:452px;top:71px;width:1408px;height:1px;background:#a4a4a4;"></div>
<div style="position:absolute;left:453px;top:41px;width:162px;height:30px;background:#d4d4d4;"></div>
<div style="position:absolute;left:453px;top:40px;width:162px;height:1px;background:#8f8f8f;"></div>
<div style="position:absolute;left:453px;top:71px;width:162px;height:1px;background:#a4a4a4;"></div>
<div style="position:absolute;left:612px;top:41px;width:3px;height:30px;background:rgba(255,255,255,0.13);"></div>
<div style="position:absolute;left:615px;top:40px;width:1px;height:32px;background:#787878;"></div>
<svg class="g" style="left:461.6px;top:43.5px;overflow:visible;" width="24" height="22" viewBox="0 -1.5 24 22"><circle cx="11" cy="11" r="10.5" fill="#8fd2e6"/><circle cx="11" cy="11" r="8.2" fill="none" stroke="#7ec6df" stroke-width="2.2"/><path d="M14.3,8.6A4,4 0 1 0 14.3,13.6" fill="none" stroke="#2b5b78" stroke-width="2.3"/></svg>
<span class="t" style="left:487.22px;top:46.22px;font-size:19px;color:#38933e;font-weight:normal;transform:scaleX(1.0396);">MyUtil.java</span>
<svg class="g" style="left:592.0px;top:50px;" width="13" height="13" viewBox="0 0 13 13"><path d="M1.4,1.4L11.4,11.6M11.4,1.4L1.4,11.6" stroke="#b4b4b4" stroke-width="1.5"/></svg>
<div style="position:absolute;left:616px;top:41px;width:174px;height:30px;background:#d4d4d4;"></div>
<div style="position:absolute;left:616px;top:40px;width:174px;height:1px;background:#8f8f8f;"></div>
<div style="position:absolute;left:616px;top:71px;width:174px;height:1px;background:#a4a4a4;"></div>
<div style="position:absolute;left:787px;top:41px;width:3px;height:30px;background:rgba(255,255,255,0.13);"></div>
<div style="position:absolute;left:790px;top:40px;width:1px;height:32px;background:#787878;"></div>
<svg class="g" style="left:624.6px;top:43.5px;overflow:visible;" width="24" height="22" viewBox="0 -1.5 24 22"><circle cx="11" cy="11" r="10.5" fill="#8fd2e6"/><circle cx="11" cy="11" r="8.2" fill="none" stroke="#7ec6df" stroke-width="2.2"/><path d="M14.3,8.6A4,4 0 1 0 14.3,13.6" fill="none" stroke="#2b5b78" stroke-width="2.3"/></svg>
<span class="t" style="left:651.12px;top:46.22px;font-size:19px;color:#38933e;font-weight:normal;transform:scaleX(1.0402);">MyUtil2.java</span>
<svg class="g" style="left:768.3px;top:50px;" width="13" height="13" viewBox="0 0 13 13"><path d="M1.4,1.4L11.4,11.6M11.4,1.4L1.4,11.6" stroke="#b4b4b4" stroke-width="1.5"/></svg>
<div style="position:absolute;left:791px;top:41px;width:174px;height:31px;background:#fff;"></div>
<div style="position:absolute;left:965px;top:40px;width:1px;height:32px;background:#787878;"></div>
<svg class="g" style="left:799.6px;top:43.5px;overflow:visible;" width="24" height="22" viewBox="0 -1.5 24 22"><circle cx="11" cy="11" r="10.5" fill="#8fd2e6"/><circle cx="11" cy="11" r="8.2" fill="none" stroke="#7ec6df" stroke-width="2.2"/><path d="M14.3,8.6A4,4 0 1 0 14.3,13.6" fill="none" stroke="#2b5b78" stroke-width="2.3"/></svg>
<span class="t" style="left:826.63px;top:46.22px;font-size:19px;color:#0f7a0f;font-weight:normal;transform:scaleX(1.0353);">MyUtil3.java</span>
<svg class="g" style="left:942.9px;top:50px;" width="13" height="13" viewBox="0 0 13 13"><path d="M1.4,1.4L11.4,11.6M11.4,1.4L1.4,11.6" stroke="#bdbdbd" stroke-width="1.5"/></svg>
<div style="position:absolute;left:966px;top:41px;width:209px;height:30px;background:#c8d5c0;"></div>
<div style="position:absolute;left:966px;top:40px;width:209px;height:1px;background:#858d82;"></div>
<div style="position:absolute;left:966px;top:71px;width:209px;height:1px;background:#98a194;"></div>
<div style="position:absolute;left:1172px;top:41px;width:3px;height:30px;background:rgba(255,255,255,0.13);"></div>
<div style="position:absolute;left:1175px;top:40px;width:1px;height:32px;background:#6f776c;"></div>
<svg class="g" style="left:974.6px;top:43.5px;overflow:visible;" width="24" height="22" viewBox="0 -1.5 24 22"><circle cx="11" cy="11" r="10.5" fill="#8fd2e6"/><circle cx="11" cy="11" r="8.2" fill="none" stroke="#7ec6df" stroke-width="2.2"/><path d="M14.3,8.6A4,4 0 1 0 14.3,13.6" fill="none" stroke="#2b5b78" stroke-width="2.3"/><path d="M15,-1.2V8.3L23,3.6Z" fill="#55b548"/></svg>
<span class="t" style="left:1001.63px;top:46.22px;font-size:19px;color:#3a9640;font-weight:normal;transform:scaleX(1.0338);">MyUtil2Test.java</span>
<svg class="g" style="left:1152.9px;top:50px;" width="13" height="13" viewBox="0 0 13 13"><path d="M1.4,1.4L11.4,11.6M11.4,1.4L1.4,11.6" stroke="#abb7a5" stroke-width="1.5"/></svg>
<div style="position:absolute;left:1176px;top:41px;width:209px;height:30px;background:#c8d5c0;"></div>
<div style="position:absolute;left:1176px;top:40px;width:209px;height:1px;background:#858d82;"></div>
<div style="position:absolute;left:1176px;top:71px;width:209px;height:1px;background:#98a194;"></div>
<div style="position:absolute;left:1382px;top:41px;width:3px;height:30px;background:rgba(255,255,255,0.13);"></div>
<div style="position:absolute;left:1385px;top:40px;width:1px;height:32px;background:#6f776c;"></div>
<svg class="g" style="left:1184.6px;top:43.5px;overflow:visible;" width="24" height="22" viewBox="0 -1.5 24 22"><circle cx="11" cy="11" r="10.5" fill="#8fd2e6"/><circle cx="11" cy="11" r="8.2" fill="none" stroke="#7ec6df" stroke-width="2.2"/><path d="M14.3,8.6A4,4 0 1 0 14.3,13.6" fill="none" stroke="#2b5b78" stroke-width="2.3"/><path d="M15,-1.2V8.3L23,3.6Z" fill="#55b548"/></svg>
<span class="t" style="left:1211.63px;top:46.22px;font-size:19px;color:#3a9640;font-weight:normal;transform:scaleX(1.0338);">MyUtil3Test.java</span>
<svg class="g" style="left:1362.9px;top:50px;" width="13" height="13" viewBox="0 0 13 13"><path d="M1.4,1.4L11.4,11.6M11.4,1.4L1.4,11.6" stroke="#abb7a5" stroke-width="1.5"/></svg>
<div style="position:absolute;left:1386px;top:41px;width:209px;height:30px;background:#c8d5c0;"></div>
<div style="position:absolute;left:1386px;top:40px;width:209px;height:1px;background:#858d82;"></div>
<div style="position:absolute;left:1386px;top:71px;width:209px;height:1px;background:#98a194;"></div>
<div style="position:absolute;left:1592px;top:41px;width:3px;height:30px;background:rgba(255,255,255,0.13);"></div>
<div style="position:absolute;left:1595px;top:40px;width:1px;height:32px;background:#6f776c;"></div>
<svg class="g" style="left:1394.6px;top:43.5px;overflow:visible;" width="24" height="22" viewBox="0 -1.5 24 22"><circle cx="11" cy="11" r="10.5" fill="#8fd2e6"/><circle cx="11" cy="11" r="8.2" fill="none" stroke="#7ec6df" stroke-width="2.2"/><path d="M14.3,8.6A4,4 0 1 0 14.3,13.6" fill="none" stroke="#2b5b78" stroke-width="2.3"/><path d="M15,-1.2V8.3L23,3.6Z" fill="#55b548"/></svg>
<span class="t" style="left:1421.64px;top:46.22px;font-size:19px;color:#3a9640;font-weight:normal;transform:scaleX(1.0316);">MyUtil4Test.java</span>
<svg class="g" style="left:1572.3px;top:50px;" width="13" height="13" viewBox="0 0 13 13"><path d="M1.4,1.4L11.4,11.6M11.4,1.4L1.4,11.6" stroke="#abb7a5" stroke-width="1.5"/></svg>
<div style="position:absolute;left:1596px;top:41px;width:199px;height:30px;background:#c8d5c0;"></div>
<div style="position:absolute;left:1596px;top:40px;width:199px;height:1px;background:#858d82;"></div>
<div style="position:absolute;left:1596px;top:71px;width:199px;height:1px;background:#98a194;"></div>
<div style="position:absolute;left:1792px;top:41px;width:3px;height:30px;background:rgba(255,255,255,0.13);"></div>
<div style="position:absolute;left:1795px;top:40px;width:1px;height:32px;background:#6f776c;"></div>
<svg class="g" style="left:1604.6px;top:43.5px;overflow:visible;" width="24" height="22" viewBox="0 -1.5 24 22"><circle cx="11" cy="11" r="10.5" fill="#8fd2e6"/><circle cx="11" cy="11" r="8.2" fill="none" stroke="#7ec6df" stroke-width="2.2"/><path d="M14.3,8.6A4,4 0 1 0 14.3,13.6" fill="none" stroke="#2b5b78" stroke-width="2.3"/><path d="M15,-1.2V8.3L23,3.6Z" fill="#55b548"/></svg>
<span class="t" style="left:1631.14px;top:46.22px;font-size:19px;color:#3a9640;font-weight:normal;transform:scaleX(1.0310);">MyUtilTest.java</span>
<svg class="g" style="left:1771.8px;top:50px;" width="13" height="13" viewBox="0 0 13 13"><path d="M1.4,1.4L11.4,11.6M11.4,1.4L1.4,11.6" stroke="#abb7a5" stroke-width="1.5"/></svg>
<div style="position:absolute;left:451px;top:41px;width:1px;height:880px;background:#959595;"></div>
<div style="position:absolute;left:452px;top:76px;width:1408px;height:813px;overflow:hidden"><div style="position:absolute;left:-452px;top:-76px;width:1860px;height:921px">
<span class="m" style="left:469.5px;top:63.57px;font-size:17px;color:#ababab;font-weight:normal;letter-spacing:-1.202px;">1</span>
<span class="m" style="left:469.5px;top:90.57px;font-size:17px;color:#ababab;font-weight:normal;letter-spacing:-1.202px;">2</span>
<span class="m" style="left:469.5px;top:117.57px;font-size:17px;color:#ababab;font-weight:normal;letter-spacing:-1.202px;">3</span>
<span class="m" style="left:469.5px;top:144.57px;font-size:17px;color:#ababab;font-weight:normal;letter-spacing:-1.202px;">4</span>
<span class="m" style="left:469.5px;top:171.57px;font-size:17px;color:#ababab;font-weight:normal;letter-spacing:-1.202px;">5</span>
<span class="m" style="left:469.5px;top:198.57px;font-size:17px;color:#b0a48e;font-weight:normal;letter-spacing:-1.202px;">6</span>
<span class="m" style="left:469.5px;top:225.57px;font-size:17px;color:#ababab;font-weight:normal;letter-spacing:-1.202px;">7</span>
<span class="m" style="left:469.5px;top:252.57px;font-size:17px;color:#ababab;font-weight:normal;letter-spacing:-1.202px;">8</span>
<span class="m" style="left:469.5px;top:279.57px;font-size:17px;color:#ababab;font-weight:normal;letter-spacing:-1.202px;">9</span>
<span class="m" style="left:460.5px;top:306.57px;font-size:17px;color:#ababab;font-weight:normal;letter-spacing:-1.202px;">10</span>
<span class="m" style="left:460.5px;top:333.57px;font-size:17px;color:#ababab;font-weight:normal;letter-spacing:-1.202px;">11</span>
<span class="m" style="left:460.5px;top:360.57px;font-size:17px;color:#ababab;font-weight:normal;letter-spacing:-1.202px;">12</span>
<span class="m" style="left:460.5px;top:387.57px;font-size:17px;color:#ababab;font-weight:normal;letter-spacing:-1.202px;">13</span>
<span class="m" style="left:460.5px;top:414.57px;font-size:17px;color:#ababab;font-weight:normal;letter-spacing:-1.202px;">14</span>
<span class="m" style="left:460.5px;top:441.57px;font-size:17px;color:#ababab;font-weight:normal;letter-spacing:-1.202px;">15</span>
<span class="m" style="left:460.5px;top:468.57px;font-size:17px;color:#ababab;font-weight:normal;letter-spacing:-1.202px;">16</span>
<span class="m" style="left:460.5px;top:495.57px;font-size:17px;color:#ababab;font-weight:normal;letter-spacing:-1.202px;">17</span>
<span class="m" style="left:460.5px;top:522.57px;font-size:17px;color:#ababab;font-weight:normal;letter-spacing:-1.202px;">18</span>
<span class="m" style="left:460.5px;top:549.57px;font-size:17px;color:#ababab;font-weight:normal;letter-spacing:-1.202px;">19</span>
<span class="m" style="left:460.5px;top:576.57px;font-size:17px;color:#ababab;font-weight:normal;letter-spacing:-1.202px;">20</span>
<span class="m" style="left:460.5px;top:603.57px;font-size:17px;color:#ababab;font-weight:normal;letter-spacing:-1.202px;">21</span>
<span class="m" style="left:460.5px;top:630.57px;font-size:17px;color:#ababab;font-weight:normal;letter-spacing:-1.202px;">22</span>
<span class="m" style="left:460.5px;top:657.57px;font-size:17px;color:#ababab;font-weight:normal;letter-spacing:-1.202px;">23</span>
<span class="m" style="left:460.5px;top:684.57px;font-size:17px;color:#ababab;font-weight:normal;letter-spacing:-1.202px;">24</span>
<span class="m" style="left:460.5px;top:711.57px;font-size:17px;color:#ababab;font-weight:normal;letter-spacing:-1.202px;">25</span>
<span class="m" style="left:460.5px;top:738.57px;font-size:17px;color:#ababab;font-weight:normal;letter-spacing:-1.202px;">26</span>
<span class="m" style="left:460.5px;top:765.57px;font-size:17px;color:#ababab;font-weight:normal;letter-spacing:-1.202px;">27</span>
<svg class="g" style="left:495px;top:142.4px;" width="19" height="19" viewBox="0 0 19 19"><circle cx="8.6" cy="9.2" r="3.1" fill="none" stroke="#4d4d4d" stroke-width="2.2"/><path d="M12.6,5V10.6C12.6,12.9 16.7,12.9 16.7,8.6C16.7,3.9 13.2,1.3 9,1.3C4.6,1.3 1.3,4.7 1.3,9C1.3,13.4 4.6,16.7 9,16.7C10.9,16.7 12.5,16.3 13.9,15.4" fill="none" stroke="#4d4d4d" stroke-width="2.1"/></svg>
<svg class="g" style="left:531px;top:143.8px;" width="16" height="17" viewBox="0 0 16 17"><path d="M0.6,0.6H14.6V9.4L7.6,15.6L0.6,9.4Z" fill="#fff" stroke="#d3d3d3" stroke-width="1.1"/><path d="M4,6.4h7.2" stroke="#c9c9c9" stroke-width="1.2"/></svg>
<svg class="g" style="left:531px;top:735.6px;" width="16" height="17" viewBox="0 0 16 17"><path d="M0.6,16H14.6V7.2L7.6,1L0.6,7.2Z" fill="#fff" stroke="#d3d3d3" stroke-width="1.1"/><path d="M4,10.6h7.2" stroke="#c9c9c9" stroke-width="1.2"/></svg>
<svg class="g" style="left:557px;top:189px;" width="18" height="24" viewBox="0 0 18 24"><path d="M9,0.8C3.6,0.8 1,4.6 1,8.4C1,12 4,13.6 4.6,16.6H13.4C14,13.6 17,12 17,8.4C17,4.6 14.4,0.8 9,0.8Z" fill="#f3b04e"/><circle cx="9" cy="8.2" r="3.2" fill="#f7c56e"/><circle cx="9" cy="8.2" r="1.2" fill="#f9dc9a"/><path d="M4.8,17.6h8.4M4.8,19.8h8.4" stroke="#8a8a8a" stroke-width="1.5"/><path d="M6,21.6h6l-1,1.4h-4z" fill="#777"/></svg>
<div style="position:absolute;left:586px;top:165px;width:1px;height:567px;background:#ebebeb;"></div>
<div style="position:absolute;left:622px;top:219px;width:1px;height:27px;background:#ebebeb;"></div>
<div style="position:absolute;left:622px;top:300px;width:1px;height:27px;background:#ebebeb;"></div>
<div style="position:absolute;left:622px;top:381px;width:1px;height:27px;background:#ebebeb;"></div>
<div style="position:absolute;left:622px;top:462px;width:1px;height:27px;background:#ebebeb;"></div>
<div style="position:absolute;left:622px;top:543px;width:1px;height:27px;background:#ebebeb;"></div>
<div style="position:absolute;left:622px;top:624px;width:1px;height:27px;background:#ebebeb;"></div>
<div style="position:absolute;left:622px;top:705px;width:1px;height:27px;background:#ebebeb;"></div>
<div style="position:absolute;left:649px;top:192px;width:9px;height:26px;background:#9bcbff;"></div>
<div style="position:absolute;left:757px;top:192px;width:9px;height:26px;background:#9bcbff;"></div>
<span class="m" style="left:548.0px;top:62.97px;font-size:17px;color:#000080;font-weight:bold;letter-spacing:-0.202px;">package</span>
<svg class="g" style="left:627px;top:58.39999999999999px" width="62" height="25" fill="#000"><text x="0" y="18" font-size="18" fill="#000" font-family="'Liberation Serif','Noto Serif CJK SC',serif">实验二</text></svg>
<span class="m" style="left:681.0px;top:62.97px;font-size:17px;color:#000;font-weight:normal;letter-spacing:-1.202px;">;</span>
<span class="m" style="left:548.0px;top:117.57px;font-size:17px;color:#000080;font-weight:bold;letter-spacing:-0.202px;">public</span>
<span class="m" style="left:617.0px;top:117.57px;font-size:17px;color:#000080;font-weight:bold;letter-spacing:-0.202px;">class</span>
<span class="m" style="left:676.0px;top:117.57px;font-size:17px;color:#000;font-weight:normal;letter-spacing:-1.202px;">MyUtil3{</span>
<span class="m" style="left:584.0px;top:144.57px;font-size:17px;color:#000080;font-weight:bold;letter-spacing:-0.202px;">public</span>
<span class="m" style="left:653.0px;top:144.57px;font-size:17px;color:#000080;font-weight:bold;letter-spacing:-0.202px;">static</span>
<span class="m" style="left:722.0px;top:144.57px;font-size:17px;color:#000;font-weight:normal;letter-spacing:-1.202px;">String percentage2fivegrade(</span>
<span class="m" style="left:974.0px;top:144.57px;font-size:17px;color:#000080;font-weight:bold;letter-spacing:-0.202px;">int</span>
<span class="m" style="left:1013.0px;top:144.57px;font-size:17px;color:#000;font-weight:normal;letter-spacing:-1.202px;">grade){</span>
<svg class="g" style="left:884px;top:159.6px;" width="82" height="4" viewBox="0 0 82 4"><path d="M0,2L2,0.4L4,2L6,0.4L8,2L10,0.4L12,2L14,0.4L16,2L18,0.4L20,2L22,0.4L24,2L26,0.4L28,2L30,0.4L32,2L34,0.4L36,2L38,0.4L40,2L42,0.4L44,2L46,0.4L48,2L50,0.4L52,2L54,0.4L56,2L58,0.4L60,2L62,0.4L64,2L66,0.4L68,2L70,0.4L72,2L74,0.4L76,2L78,0.4L80,2L82,0.4" fill="none" stroke="#cfcfcf" stroke-width="1"/></svg>
<svg class="g" style="left:620px;top:170.6px;" width="20" height="18" viewBox="0 0 20 18"><path d="M1,16.6L8.6,0.8M10,16.6L17.6,0.8" fill="none" stroke="#8d8d8d" stroke-width="1.15"/></svg>
<svg class="g" style="left:638.8px;top:166.7px" width="116" height="25" fill="#8a8a8a"><text transform="translate(0,18) skewX(-11)" x="0 18 36 54 72 90" y="0" font-size="18" fill="#8a8a8a" font-family="'Liberation Serif','Noto Serif CJK SC',serif">如果成绩小于</text></svg>
<span class="m" style="left:746.6px;top:171.57px;font-size:17px;color:#8a8a8a;font-weight:normal;letter-spacing:-1.202px;font-style:italic;">0</span>
<svg class="g" style="left:755.8px;top:166.7px" width="134" height="25" fill="#8a8a8a"><text transform="translate(0,18) skewX(-11)" x="0 18 36 64 72 90 108" y="0" font-size="18" fill="#8a8a8a" font-family="'Liberation Serif','Noto Serif CJK SC',serif">，转成“错误”</text></svg>
<span class="m" style="left:620.0px;top:198.57px;font-size:17px;color:#000080;font-weight:bold;letter-spacing:-0.202px;">if</span>
<span class="m" style="left:649.0px;top:198.57px;font-size:17px;color:#000;font-weight:normal;letter-spacing:-1.202px;">((grade &lt; </span>
<span class="m" style="left:739.0px;top:198.57px;font-size:17px;color:#0000ff;font-weight:normal;letter-spacing:-1.202px;">0</span>
<span class="m" style="left:748.0px;top:198.57px;font-size:17px;color:#000;font-weight:normal;letter-spacing:-1.202px;">))</span>
<span class="m" style="left:656.0px;top:225.57px;font-size:17px;color:#000080;font-weight:bold;letter-spacing:-0.202px;">return</span>
<svg class="g" style="left:725px;top:225.0px;" width="10" height="6" viewBox="0 0 10 6"><path d="M1.2,4.3L3.3,0H5.6L3.1,4.3ZM4.5,4.3L6.6,0H8.9L6.4,4.3Z" fill="#008000"/></svg>
<svg class="g" style="left:735.5px;top:221.0px" width="46" height="25" fill="#008000"><text x="0 19" y="18" font-size="18" font-weight="bold" fill="#008000" font-family="'Liberation Serif','Noto Serif CJK SC',serif">错误</text></svg>
<svg class="g" style="left:773px;top:225.0px;" width="10" height="6" viewBox="0 0 10 6"><path d="M1.2,4.3L3.3,0H5.6L3.1,4.3ZM4.5,4.3L6.6,0H8.9L6.4,4.3Z" fill="#008000"/></svg>
<span class="m" style="left:783.0px;top:225.57px;font-size:17px;color:#000;font-weight:normal;letter-spacing:-1.202px;">;</span>
<svg class="g" style="left:656px;top:251.60000000000002px;" width="20" height="18" viewBox="0 0 20 18"><path d="M1,16.6L8.6,0.8M10,16.6L17.6,0.8" fill="none" stroke="#8d8d8d" stroke-width="1.15"/></svg>
<svg class="g" style="left:674.8px;top:247.70000000000005px" width="116" height="25" fill="#8a8a8a"><text transform="translate(0,18) skewX(-11)" x="0 18 36 54 72 90" y="0" font-size="18" fill="#8a8a8a" font-family="'Liberation Serif','Noto Serif CJK SC',serif">如果成绩小于</text></svg>
<span class="m" style="left:782.6px;top:252.57px;font-size:17px;color:#8a8a8a;font-weight:normal;letter-spacing:-1.202px;font-style:italic;">60</span>
<svg class="g" style="left:800.8px;top:247.70000000000005px" width="152" height="25" fill="#8a8a8a"><text transform="translate(0,18) skewX(-11)" x="0 18 36 64 72 90 108 126" y="0" font-size="18" fill="#8a8a8a" font-family="'Liberation Serif','Noto Serif CJK SC',serif">，转成“不及格”</text></svg>
<span class="m" style="left:620.0px;top:279.57px;font-size:17px;color:#000080;font-weight:bold;letter-spacing:-0.202px;">else</span>
<span class="m" style="left:669.0px;top:279.57px;font-size:17px;color:#000080;font-weight:bold;letter-spacing:-0.202px;">if</span>
<span class="m" style="left:698.0px;top:279.57px;font-size:17px;color:#000;font-weight:normal;letter-spacing:-1.202px;">(grade &lt; </span>
<span class="m" style="left:779.0px;top:279.57px;font-size:17px;color:#0000ff;font-weight:normal;letter-spacing:-1.202px;">60</span>
<span class="m" style="left:797.0px;top:279.57px;font-size:17px;color:#000;font-weight:normal;letter-spacing:-1.202px;">)</span>
<span class="m" style="left:656.0px;top:306.57px;font-size:17px;color:#000080;font-weight:bold;letter-spacing:-0.202px;">return</span>
<svg class="g" style="left:725px;top:306.0px;" width="10" height="6" viewBox="0 0 10 6"><path d="M1.2,4.3L3.3,0H5.6L3.1,4.3ZM4.5,4.3L6.6,0H8.9L6.4,4.3Z" fill="#008000"/></svg>
<svg class="g" style="left:735.5px;top:302.0px" width="65" height="25" fill="#008000"><text x="0 19 38" y="18" font-size="18" font-weight="bold" fill="#008000" font-family="'Liberation Serif','Noto Serif CJK SC',serif">不及格</text></svg>
<svg class="g" style="left:792px;top:306.0px;" width="10" height="6" viewBox="0 0 10 6"><path d="M1.2,4.3L3.3,0H5.6L3.1,4.3ZM4.5,4.3L6.6,0H8.9L6.4,4.3Z" fill="#008000"/></svg>
<span class="m" style="left:802.0px;top:306.57px;font-size:17px;color:#000;font-weight:normal;letter-spacing:-1.202px;">;</span>
<svg class="g" style="left:656px;top:332.6px;" width="20" height="18" viewBox="0 0 20 18"><path d="M1,16.6L8.6,0.8M10,16.6L17.6,0.8" fill="none" stroke="#8d8d8d" stroke-width="1.15"/></svg>
<svg class="g" style="left:674.8px;top:328.70000000000005px" width="98" height="25" fill="#8a8a8a"><text transform="translate(0,18) skewX(-11)" x="0 18 36 54 72" y="0" font-size="18" fill="#8a8a8a" font-family="'Liberation Serif','Noto Serif CJK SC',serif">如果成绩在</text></svg>
<span class="m" style="left:764.6px;top:333.57px;font-size:17px;color:#8a8a8a;font-weight:normal;letter-spacing:-1.202px;font-style:italic;">60</span>
<svg class="g" style="left:782.8px;top:328.70000000000005px" width="26" height="25" fill="#8a8a8a"><text transform="translate(0,18) skewX(-11)" x="0" y="0" font-size="18" fill="#8a8a8a" font-family="'Liberation Serif','Noto Serif CJK SC',serif">与</text></svg>
<span class="m" style="left:800.6px;top:333.57px;font-size:17px;color:#8a8a8a;font-weight:normal;letter-spacing:-1.202px;font-style:italic;">70</span>
<svg class="g" style="left:818.8px;top:328.70000000000005px" width="170" height="25" fill="#8a8a8a"><text transform="translate(0,18) skewX(-11)" x="0 18 36 54 72 100 108 126 144" y="0" font-size="18" fill="#8a8a8a" font-family="'Liberation Serif','Noto Serif CJK SC',serif">之间，转成“及格”</text></svg>
<span class="m" style="left:620.0px;top:360.57px;font-size:17px;color:#000080;font-weight:bold;letter-spacing:-0.202px;">else</span>
<span class="m" style="left:669.0px;top:360.57px;font-size:17px;color:#000080;font-weight:bold;letter-spacing:-0.202px;">if</span>
<span class="m" style="left:698.0px;top:360.57px;font-size:17px;color:#000;font-weight:normal;letter-spacing:-1.202px;">(grade &lt; </span>
<span class="m" style="left:779.0px;top:360.57px;font-size:17px;color:#0000ff;font-weight:normal;letter-spacing:-1.202px;">70</span>
<span class="m" style="left:797.0px;top:360.57px;font-size:17px;color:#000;font-weight:normal;letter-spacing:-1.202px;">)</span>
<span class="m" style="left:656.0px;top:387.57px;font-size:17px;color:#000080;font-weight:bold;letter-spacing:-0.202px;">return</span>
<svg class="g" style="left:725px;top:387.0px;" width="10" height="6" viewBox="0 0 10 6"><path d="M1.2,4.3L3.3,0H5.6L3.1,4.3ZM4.5,4.3L6.6,0H8.9L6.4,4.3Z" fill="#008000"/></svg>
<svg class="g" style="left:735.5px;top:383.0px" width="46" height="25" fill="#008000"><text x="0 19" y="18" font-size="18" font-weight="bold" fill="#008000" font-family="'Liberation Serif','Noto Serif CJK SC',serif">及格</text></svg>
<svg class="g" style="left:773px;top:387.0px;" width="10" height="6" viewBox="0 0 10 6"><path d="M1.2,4.3L3.3,0H5.6L3.1,4.3ZM4.5,4.3L6.6,0H8.9L6.4,4.3Z" fill="#008000"/></svg>
<span class="m" style="left:783.0px;top:387.57px;font-size:17px;color:#000;font-weight:normal;letter-spacing:-1.202px;">;</span>
<svg class="g" style="left:656px;top:413.6px;" width="20" height="18" viewBox="0 0 20 18"><path d="M1,16.6L8.6,0.8M10,16.6L17.6,0.8" fill="none" stroke="#8d8d8d" stroke-width="1.15"/></svg>
<svg class="g" style="left:674.8px;top:409.70000000000005px" width="98" height="25" fill="#8a8a8a"><text transform="translate(0,18) skewX(-11)" x="0 18 36 54 72" y="0" font-size="18" fill="#8a8a8a" font-family="'Liberation Serif','Noto Serif CJK SC',serif">如果成绩在</text></svg>
<span class="m" style="left:764.6px;top:414.57px;font-size:17px;color:#8a8a8a;font-weight:normal;letter-spacing:-1.202px;font-style:italic;">70</span>
<svg class="g" style="left:782.8px;top:409.70000000000005px" width="26" height="25" fill="#8a8a8a"><text transform="translate(0,18) skewX(-11)" x="0" y="0" font-size="18" fill="#8a8a8a" font-family="'Liberation Serif','Noto Serif CJK SC',serif">与</text></svg>
<span class="m" style="left:800.6px;top:414.57px;font-size:17px;color:#8a8a8a;font-weight:normal;letter-spacing:-1.202px;font-style:italic;">80</span>
<svg class="g" style="left:818.8px;top:409.70000000000005px" width="170" height="25" fill="#8a8a8a"><text transform="translate(0,18) skewX(-11)" x="0 18 36 54 72 100 108 126 144" y="0" font-size="18" fill="#8a8a8a" font-family="'Liberation Serif','Noto Serif CJK SC',serif">之间，转成“中等”</text></svg>
<span class="m" style="left:620.0px;top:441.57px;font-size:17px;color:#000080;font-weight:bold;letter-spacing:-0.202px;">else</span>
<span class="m" style="left:669.0px;top:441.57px;font-size:17px;color:#000080;font-weight:bold;letter-spacing:-0.202px;">if</span>
<span class="m" style="left:698.0px;top:441.57px;font-size:17px;color:#000;font-weight:normal;letter-spacing:-1.202px;">(grade &lt; </span>
<span class="m" style="left:779.0px;top:441.57px;font-size:17px;color:#0000ff;font-weight:normal;letter-spacing:-1.202px;">80</span>
<span class="m" style="left:797.0px;top:441.57px;font-size:17px;color:#000;font-weight:normal;letter-spacing:-1.202px;">)</span>
<span class="m" style="left:656.0px;top:468.57px;font-size:17px;color:#000080;font-weight:bold;letter-spacing:-0.202px;">return</span>
<svg class="g" style="left:725px;top:468.0px;" width="10" height="6" viewBox="0 0 10 6"><path d="M1.2,4.3L3.3,0H5.6L3.1,4.3ZM4.5,4.3L6.6,0H8.9L6.4,4.3Z" fill="#008000"/></svg>
<svg class="g" style="left:735.5px;top:464.0px" width="46" height="25" fill="#008000"><text x="0 19" y="18" font-size="18" font-weight="bold" fill="#008000" font-family="'Liberation Serif','Noto Serif CJK SC',serif">中等</text></svg>
<svg class="g" style="left:773px;top:468.0px;" width="10" height="6" viewBox="0 0 10 6"><path d="M1.2,4.3L3.3,0H5.6L3.1,4.3ZM4.5,4.3L6.6,0H8.9L6.4,4.3Z" fill="#008000"/></svg>
<span class="m" style="left:783.0px;top:468.57px;font-size:17px;color:#000;font-weight:normal;letter-spacing:-1.202px;">;</span>
<svg class="g" style="left:656px;top:494.6px;" width="20" height="18" viewBox="0 0 20 18"><path d="M1,16.6L8.6,0.8M10,16.6L17.6,0.8" fill="none" stroke="#8d8d8d" stroke-width="1.15"/></svg>
<svg class="g" style="left:674.8px;top:490.70000000000005px" width="98" height="25" fill="#8a8a8a"><text transform="translate(0,18) skewX(-11)" x="0 18 36 54 72" y="0" font-size="18" fill="#8a8a8a" font-family="'Liberation Serif','Noto Serif CJK SC',serif">如果成绩在</text></svg>
<span class="m" style="left:764.6px;top:495.57px;font-size:17px;color:#8a8a8a;font-weight:normal;letter-spacing:-1.202px;font-style:italic;">80</span>
<svg class="g" style="left:782.8px;top:490.70000000000005px" width="26" height="25" fill="#8a8a8a"><text transform="translate(0,18) skewX(-11)" x="0" y="0" font-size="18" fill="#8a8a8a" font-family="'Liberation Serif','Noto Serif CJK SC',serif">与</text></svg>
<span class="m" style="left:800.6px;top:495.57px;font-size:17px;color:#8a8a8a;font-weight:normal;letter-spacing:-1.202px;font-style:italic;">90</span>
<svg class="g" style="left:818.8px;top:490.70000000000005px" width="170" height="25" fill="#8a8a8a"><text transform="translate(0,18) skewX(-11)" x="0 18 36 54 72 100 108 126 144" y="0" font-size="18" fill="#8a8a8a" font-family="'Liberation Serif','Noto Serif CJK SC',serif">之间，转成“良好”</text></svg>
<span class="m" style="left:620.0px;top:522.57px;font-size:17px;color:#000080;font-weight:bold;letter-spacing:-0.202px;">else</span>
<span class="m" style="left:669.0px;top:522.57px;font-size:17px;color:#000080;font-weight:bold;letter-spacing:-0.202px;">if</span>
<span class="m" style="left:698.0px;top:522.57px;font-size:17px;color:#000;font-weight:normal;letter-spacing:-1.202px;">(grade &lt; </span>
<span class="m" style="left:779.0px;top:522.57px;font-size:17px;color:#0000ff;font-weight:normal;letter-spacing:-1.202px;">90</span>
<span class="m" style="left:797.0px;top:522.57px;font-size:17px;color:#000;font-weight:normal;letter-spacing:-1.202px;">)</span>
<span class="m" style="left:656.0px;top:549.57px;font-size:17px;color:#000080;font-weight:bold;letter-spacing:-0.202px;">return</span>
<svg class="g" style="left:725px;top:549.0px;" width="10" height="6" viewBox="0 0 10 6"><path d="M1.2,4.3L3.3,0H5.6L3.1,4.3ZM4.5,4.3L6.6,0H8.9L6.4,4.3Z" fill="#008000"/></svg>
<svg class="g" style="left:735.5px;top:545.0px" width="46" height="25" fill="#008000"><text x="0 19" y="18" font-size="18" font-weight="bold" fill="#008000" font-family="'Liberation Serif','Noto Serif CJK SC',serif">良好</text></svg>
<svg class="g" style="left:773px;top:549.0px;" width="10" height="6" viewBox="0 0 10 6"><path d="M1.2,4.3L3.3,0H5.6L3.1,4.3ZM4.5,4.3L6.6,0H8.9L6.4,4.3Z" fill="#008000"/></svg>
<span class="m" style="left:783.0px;top:549.57px;font-size:17px;color:#000;font-weight:normal;letter-spacing:-1.202px;">;</span>
<svg class="g" style="left:656px;top:575.6px;" width="20" height="18" viewBox="0 0 20 18"><path d="M1,16.6L8.6,0.8M10,16.6L17.6,0.8" fill="none" stroke="#8d8d8d" stroke-width="1.15"/></svg>
<svg class="g" style="left:674.8px;top:571.7px" width="98" height="25" fill="#8a8a8a"><text transform="translate(0,18) skewX(-11)" x="0 18 36 54 72" y="0" font-size="18" fill="#8a8a8a" font-family="'Liberation Serif','Noto Serif CJK SC',serif">如果成绩在</text></svg>
<span class="m" style="left:764.6px;top:576.57px;font-size:17px;color:#8a8a8a;font-weight:normal;letter-spacing:-1.202px;font-style:italic;">90</span>
<svg class="g" style="left:782.8px;top:571.7px" width="26" height="25" fill="#8a8a8a"><text transform="translate(0,18) skewX(-11)" x="0" y="0" font-size="18" fill="#8a8a8a" font-family="'Liberation Serif','Noto Serif CJK SC',serif">与</text></svg>
<span class="m" style="left:800.6px;top:576.57px;font-size:17px;color:#8a8a8a;font-weight:normal;letter-spacing:-1.202px;font-style:italic;">100</span>
<svg class="g" style="left:827.8px;top:571.7px" width="170" height="25" fill="#8a8a8a"><text transform="translate(0,18) skewX(-11)" x="0 18 36 54 72 100 108 126 144" y="0" font-size="18" fill="#8a8a8a" font-family="'Liberation Serif','Noto Serif CJK SC',serif">之间，转成“优秀”</text></svg>
<span class="m" style="left:620.0px;top:603.57px;font-size:17px;color:#000080;font-weight:bold;letter-spacing:-0.202px;">else</span>
<span class="m" style="left:669.0px;top:603.57px;font-size:17px;color:#000080;font-weight:bold;letter-spacing:-0.202px;">if</span>
<span class="m" style="left:698.0px;top:603.57px;font-size:17px;color:#000;font-weight:normal;letter-spacing:-1.202px;">(grade &lt;= </span>
<span class="m" style="left:788.0px;top:603.57px;font-size:17px;color:#0000ff;font-weight:normal;letter-spacing:-1.202px;">100</span>
<span class="m" style="left:815.0px;top:603.57px;font-size:17px;color:#000;font-weight:normal;letter-spacing:-1.202px;">)</span>
<span class="m" style="left:656.0px;top:630.57px;font-size:17px;color:#000080;font-weight:bold;letter-spacing:-0.202px;">return</span>
<svg class="g" style="left:725px;top:630.0px;" width="10" height="6" viewBox="0 0 10 6"><path d="M1.2,4.3L3.3,0H5.6L3.1,4.3ZM4.5,4.3L6.6,0H8.9L6.4,4.3Z" fill="#008000"/></svg>
<svg class="g" style="left:735.5px;top:626.0px" width="46" height="25" fill="#008000"><text x="0 19" y="18" font-size="18" font-weight="bold" fill="#008000" font-family="'Liberation Serif','Noto Serif CJK SC',serif">优秀</text></svg>
<svg class="g" style="left:773px;top:630.0px;" width="10" height="6" viewBox="0 0 10 6"><path d="M1.2,4.3L3.3,0H5.6L3.1,4.3ZM4.5,4.3L6.6,0H8.9L6.4,4.3Z" fill="#008000"/></svg>
<span class="m" style="left:783.0px;top:630.57px;font-size:17px;color:#000;font-weight:normal;letter-spacing:-1.202px;">;</span>
<svg class="g" style="left:656px;top:656.6px;" width="20" height="18" viewBox="0 0 20 18"><path d="M1,16.6L8.6,0.8M10,16.6L17.6,0.8" fill="none" stroke="#8d8d8d" stroke-width="1.15"/></svg>
<svg class="g" style="left:674.8px;top:652.7px" width="116" height="25" fill="#8a8a8a"><text transform="translate(0,18) skewX(-11)" x="0 18 36 54 72 90" y="0" font-size="18" fill="#8a8a8a" font-family="'Liberation Serif','Noto Serif CJK SC',serif">如果成绩大于</text></svg>
<span class="m" style="left:782.6px;top:657.57px;font-size:17px;color:#8a8a8a;font-weight:normal;letter-spacing:-1.202px;font-style:italic;">100</span>
<svg class="g" style="left:809.8px;top:652.7px" width="134" height="25" fill="#8a8a8a"><text transform="translate(0,18) skewX(-11)" x="0 18 36 64 72 90 108" y="0" font-size="18" fill="#8a8a8a" font-family="'Liberation Serif','Noto Serif CJK SC',serif">，转成“错误”</text></svg>
<span class="m" style="left:620.0px;top:684.57px;font-size:17px;color:#000080;font-weight:bold;letter-spacing:-0.202px;">else</span>
<span class="m" style="left:656.0px;top:711.57px;font-size:17px;color:#000080;font-weight:bold;letter-spacing:-0.202px;">return</span>
<svg class="g" style="left:725px;top:711.0px;" width="10" height="6" viewBox="0 0 10 6"><path d="M1.2,4.3L3.3,0H5.6L3.1,4.3ZM4.5,4.3L6.6,0H8.9L6.4,4.3Z" fill="#008000"/></svg>
<svg class="g" style="left:735.5px;top:707.0px" width="46" height="25" fill="#008000"><text x="0 19" y="18" font-size="18" font-weight="bold" fill="#008000" font-family="'Liberation Serif','Noto Serif CJK SC',serif">错误</text></svg>
<svg class="g" style="left:773px;top:711.0px;" width="10" height="6" viewBox="0 0 10 6"><path d="M1.2,4.3L3.3,0H5.6L3.1,4.3ZM4.5,4.3L6.6,0H8.9L6.4,4.3Z" fill="#008000"/></svg>
<span class="m" style="left:783.0px;top:711.57px;font-size:17px;color:#000;font-weight:normal;letter-spacing:-1.202px;">;</span>
<span class="m" style="left:584.0px;top:738.57px;font-size:17px;color:#000;font-weight:normal;letter-spacing:-1.202px;">}</span>
<span class="m" style="left:548.0px;top:765.57px;font-size:17px;color:#000;font-weight:normal;letter-spacing:-1.202px;">}</span>
</div></div>
<span class="t" style="left:546.99px;top:895.92px;font-size:19px;color:#5c5c5c;font-weight:normal;transform:scaleX(1.1049);">MyUtil3</span>
<svg class="g" style="left:627px;top:899px;" width="6" height="14" viewBox="0 0 6 14"><path d="M1,1.5L4.4,7L1,12.5" fill="none" stroke="#a8a8a8" stroke-width="1.1"/></svg>
<span class="t" style="left:641.37px;top:895.92px;font-size:19px;color:#5c5c5c;font-weight:normal;transform:scaleX(1.0297);">percentage2fivegrade()</span>
</body></html>
